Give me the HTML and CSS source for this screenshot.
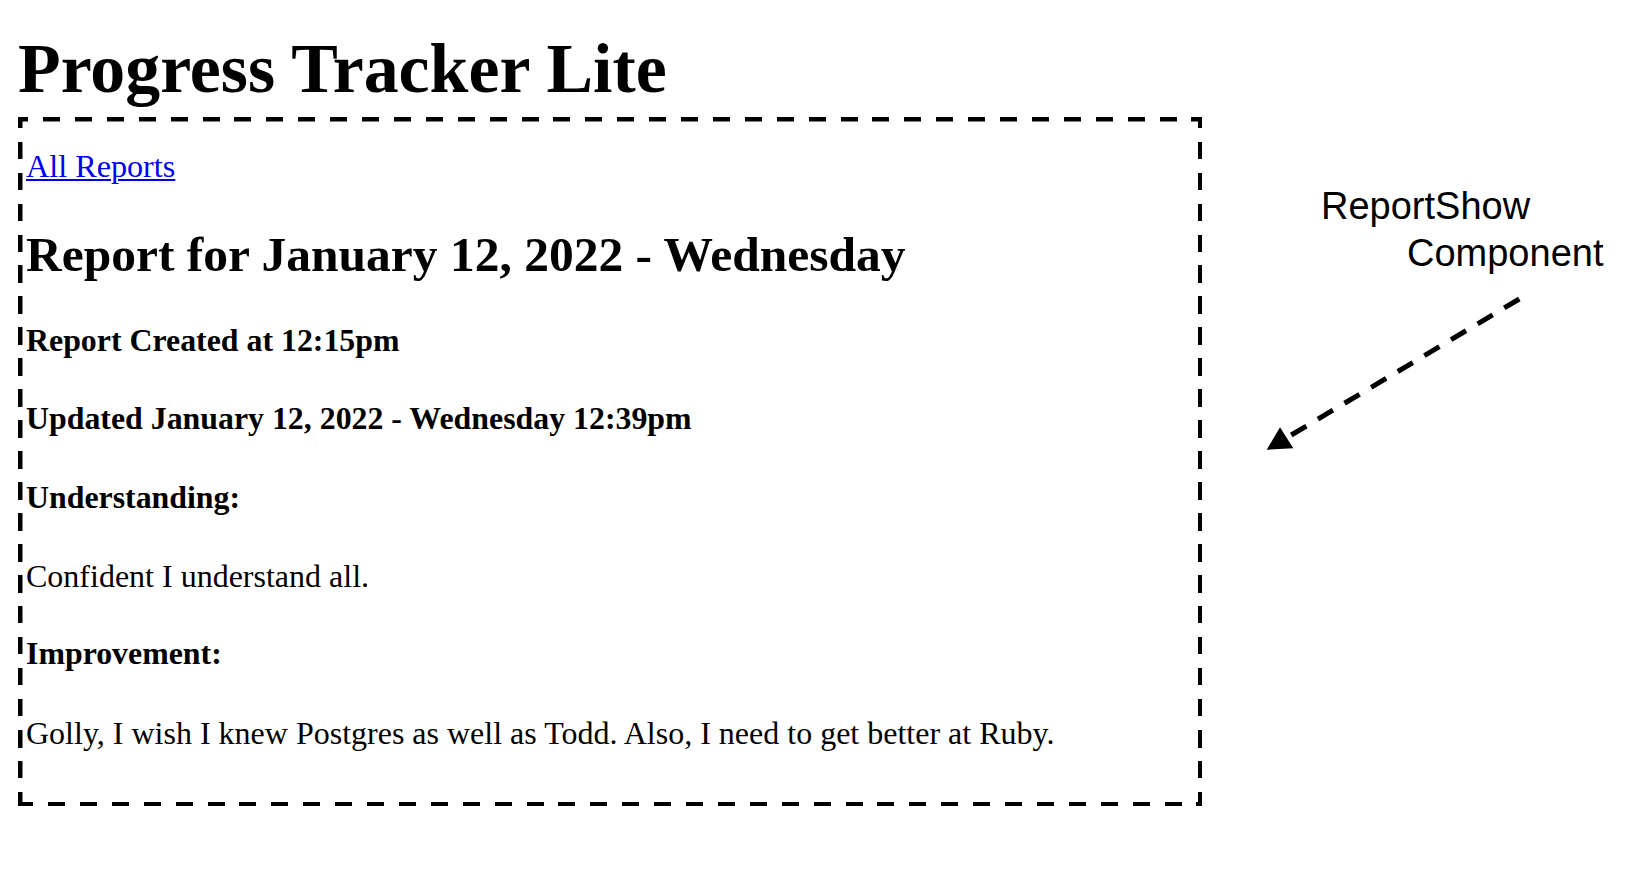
FILE: index.html
```html
<!DOCTYPE html>
<html lang="en">
<head>
<meta charset="utf-8">
<title>Progress Tracker Lite</title>
<link rel="stylesheet" href="styles.css">
</head>
<body>
<div class="page">
  <main class="main">
    <h1 class="title">Progress Tracker Lite</h1>
    <section class="report">
      <p class="back-row"><a class="back" href="#">All Reports</a></p>
      <h2 class="report-title">Report for January 12, 2022 - Wednesday</h2>
      <h4 class="line strong first">Report Created at 12:15pm</h4>
      <h4 class="line strong">Updated January 12, 2022 - Wednesday 12:39pm</h4>
      <h4 class="line strong">Understanding:</h4>
      <p class="line">Confident I understand all.</p>
      <h4 class="line strong">Improvement:</h4>
      <p class="line">Golly, I wish I knew Postgres as well as Todd. Also, I need to get better at Ruby.</p>
    </section>
  </main>
  <aside class="note">
    <p class="note-text"><span class="note-line">ReportShow</span><span class="note-line indent">Component</span></p>
    <svg class="arrow" width="265" height="160" viewBox="0 0 265 160" aria-hidden="true">
      <line x1="259.3" y1="5" x2="30.8" y2="141.3" stroke="#000" stroke-width="5" stroke-dasharray="17.5 13.5"/>
      <polygon points="6.7,155.7 20,133.3 33.3,154.3" fill="#000"/>
    </svg>
  </aside>
</div>
</body>
</html>
```

FILE: styles.css
```css
html, body {
  margin: 0;
  background: #ffffff;
  color: #000000;
}

body {
  font-family: "Liberation Serif", "Times New Roman", serif;
}

.page {
  display: flex;
  align-items: flex-start;
  padding: 29.5px 0 0 18px;
}

.main {
  flex: none;
  width: 1184px;
}

.title {
  margin: 0 0 9.5px;
  font-size: 69.8px;
  line-height: 78px;
  font-weight: bold;
  white-space: nowrap;
}

.report {
  box-sizing: border-box;
  width: 1184px;
  padding: 31.1px 8px 55.4px 8px;
  background:
    repeating-linear-gradient(to right, #000 0 17px, transparent 17px 31.9px) -6.9px 0 / calc(100% + 6.9px) 4.5px no-repeat,
    repeating-linear-gradient(to right, #000 0 17px, transparent 17px 31.9px) -1.9px 100% / calc(100% + 1.9px) 4.5px no-repeat,
    repeating-linear-gradient(to bottom, #000 0 17px, transparent 17px 31px) 0 -6.5px / 4.5px calc(100% + 6.5px) no-repeat,
    repeating-linear-gradient(to bottom, #000 0 17px, transparent 17px 31px) 100% -6.5px / 4.5px calc(100% + 6.5px) no-repeat;
}

.back-row {
  margin: 0;
  font-size: 32.2px;
  line-height: 36px;
}

.back {
  color: #0000ee;
  text-decoration: underline;
  text-decoration-thickness: 2px;
  text-underline-offset: 2px;
}

.report-title {
  margin: 42.8px 0 0;
  font-size: 49.5px;
  line-height: 56px;
  font-weight: bold;
  white-space: nowrap;
}

.line {
  margin: 42.4px 0 0;
  font-size: 32px;
  line-height: 36px;
  font-weight: normal;
  white-space: nowrap;
}

.line.first {
  margin-top: 39.9px;
}

.line.strong {
  font-weight: bold;
  font-size: 31.85px;
}

.note {
  flex: none;
  margin-left: 58px;
  padding-top: 153px;
}

.note-text {
  margin: 0;
  padding-left: 61px;
  font-family: "Liberation Sans", Arial, Helvetica, sans-serif;
  font-size: 38px;
  line-height: 47px;
  white-space: nowrap;
}

.note-line {
  display: block;
}

.note-line.indent {
  padding-left: 86px;
}

.arrow {
  display: block;
  margin-top: 17.5px;
}
```
